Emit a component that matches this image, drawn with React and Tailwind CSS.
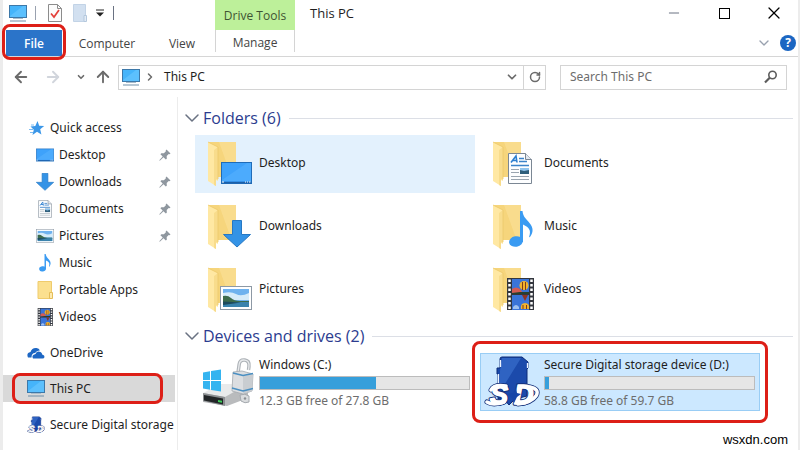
import { ArrowLeft, ArrowRight, ArrowUp, ChevronDown, ChevronRight, Minus, RotateCw, X } from "lucide-react";

/* ---------- artwork, drawn on the 52x52 canvas of the large tiles ---------- */

function DesktopArt() {
  return (
    <g>
      <rect x="20.5" y="24.5" width="30" height="21" fill="#3ea2fb" stroke="#1f6cb8" />
      <path d="M21 42 L46 25 H50 V43 H21z" fill="#56b0ff" opacity=".6" />
      <path d="M21 44.500h29" stroke="#1c5fa8" strokeWidth="1.500" />
      <path d="M21 44h2M44 44h1M46 44h1M48 44h1.500" stroke="#fff" strokeWidth="1.200" />
    </g>
  );
}

function DownloadArt() {
  return <path d="M31.500 19.500h9v14h9L36 46 22.500 33.500h9z" fill="#3493e6" stroke="#2678c4" />;
}

function DocumentArt() {
  return (
    <g>
      <path d="M22.500 15.500h17l6 6v24h-23z" fill="#fdfeff" stroke="#7b8794" />
      <path d="M39.500 15.500v6h6" fill="#e3e8ee" stroke="#7b8794" />
      <path d="M25 24.500l5-6.500 1 6.500M27 22.500h4" fill="none" stroke="#2d7fd0" strokeWidth="1.600" />
      <path d="M33 20.500h5M33 23.500h8M25 27.500h18" stroke="#3b83c9" strokeWidth="1.500" />
      <path d="M25 31.500h8M25 34.500h8M25 38.500h18M25 41.500h18" stroke="#9aa5b0" />
      <rect x="34" y="30" width="9" height="6" fill="#2f5f7c" />
      <path d="M34 30h9v2l-5 1-4-1z" fill="#8fc4ee" />
    </g>
  );
}

function MusicArt() {
  return (
    <g fill="#3a9bf2">
      <ellipse cx="30" cy="40.500" rx="7" ry="5.300" transform="rotate(-10 30 40.500)" />
      <path d="M34 10h2.500c.5 6 4 8 7 12 4 5 4 9 .5 14-.5.500-1 0-.8-.6 2-6 .3-9-6.200-12V41H34z" />
    </g>
  );
}

function PictureArt() {
  return (
    <g>
      <rect x="19.500" y="22.500" width="31" height="23" fill="#fff" stroke="#8d99a5" />
      <rect x="22" y="25" width="26" height="18" fill="#6fb2ee" />
      <path d="M22 29q8-2 13 1t13-1v7H22z" fill="#d6ebf9" />
      <path d="M22 32q5-1 8 2t9 3h9v2H22z" fill="#3d6b4c" />
      <path d="M22 38h26v5H22z" fill="#3a83ad" />
      <path d="M22 37.500l18 1L22 41z" fill="#1d4a5c" />
    </g>
  );
}

function VideoArt() {
  return (
    <g>
      <rect x="21" y="14" width="27" height="32" fill="#33363d" />
      <rect x="26" y="15" width="17" height="15" fill="#3a74d8" />
      <rect x="26" y="31" width="17" height="15" fill="#3a74d8" />
      <path d="M23.500 15.500v30M45.500 15.500v30" stroke="#fff" strokeWidth="2.500" strokeDasharray="2.500 2" />
      <ellipse cx="38" cy="21.500" rx="4.500" ry="4.500" fill="#f2b32c" />
      <path d="M36.500 18v8M39.500 18v8" stroke="#7b3b1d" />
      <path d="M26 25q4-3 8 0l3 4H26z" fill="#d45b52" />
      <path d="M34 28h9v2H26v-1z" fill="#28402e" />
      <path d="M36 31h6l-3 6z" fill="#8d3425" />
      <path d="M35 45q-1-6 4-6t4 6z" fill="#f2b32c" />
      <path d="M37 41v4M40.500 41v4" stroke="#7b3b1d" />
      <path d="M27 43q3-4 6 0v2h-6z" fill="#9fc1f0" />
    </g>
  );
}

function SdLetters(props) {
  return (
    <g fontFamily="Liberation Sans, sans-serif" fontSize="27" fontWeight="bold" fontStyle="italic" strokeLinejoin="round" {...props}>
      <text x="4" y="47">S</text>
      <text x="28" y="47">D</text>
    </g>
  );
}

function SdArt() {
  return (
    <g>
      <path d="M14 2q0-2 2-2h20l6 5v6l-1 1v27L29 42l-6 6-5-6H12V17h-1v-6h3z" fill="#1b4aab" stroke="#0d2a76" />
      <path d="M16 1h19L17 30h-3V14z" fill="#3d74d2" opacity=".6" />
      <path d="M14.500 3v7M12.500 17v14M41.500 6v5" stroke="#eef4ff" strokeWidth="1.300" />
      {/* swoosh behind the letters, outlined first and then filled */}
      <path d="M20 29Q8 27 5 33M1 45q6 4 17 0M44 30q10 2 6 9-5 7-18 8" fill="none" stroke="#14307a" strokeWidth="5" strokeLinecap="round" />
      <SdLetters stroke="#14307a" strokeWidth="3.5" />
      <path d="M20 29Q8 27 5 33M1 45q6 4 17 0M44 30q10 2 6 9-5 7-18 8" fill="none" stroke="#fff" strokeWidth="3.500" strokeLinecap="round" />
      <SdLetters fill="#fff" stroke="#fff" strokeWidth="1.5" />
      <path d="M21 37l6-1 3-5 1 5 4 1-4 3-3 6-2-5z" fill="#1746a8" />
    </g>
  );
}

function LockedDriveArt() {
  return (
    <g>
      <path d="M2 37l18-10h27v14L26 49 2 45z" fill="#b9bbbd" />
      <path d="M2 36l18-9h27L24 40z" fill="#e9eaeb" />
      <path d="M2 36l22 4v9L2 44z" fill="#8c8f92" />
      <path d="M3 38l19 3.500v6L3 43.500z" fill="#222527" />
      <path d="M17 43l4 .8v2l-4-.8z" fill="#3fd05a" />
      <path d="M2 15.500l7-1.200V23H2zM10 14.100l10-1.600V23H10zM2 24h7v8.700l-7-1.200zM10 24h10v10.500l-10-1.600z" fill="#35b4f0" />
      <path d="M38 16V8q0-5 5-5t5 6v8" fill="none" stroke="#aeb3b8" strokeWidth="3.500" strokeDasharray="28 99" transform="rotate(8 43 9)" />
      <path d="M38 16V8q0-5 5-5t5 6v8" fill="none" stroke="#e8eaec" strokeWidth="1.300" strokeDasharray="28 99" transform="rotate(8 43 9)" />
      <path d="M32 15l9-1 11 3-1 17-9 3-11-3z" fill="#dcdee1" stroke="#a5aaaf" strokeWidth=".8" />
      <path d="M42 19l10-2-1 17-9 3z" fill="#c9cdd1" />
      <path d="M32 16l10 2.500 10-2M31 31l11 3 10-2.500" fill="none" stroke="#4a8fc2" strokeWidth="1.400" />
      <path d="M39 38q5-2 9 1v6q-4 2-8-1z" fill="#dadcde" stroke="#a5aaaf" />
      <circle cx="44" cy="41.500" r="1.200" fill="#8a8e92" />
    </g>
  );
}

function FolderArt() {
  return (
    <g>
      <path d="M8 4h27v35H16z" fill="#f6d57c" />
      <path d="M18 4h17v35l-4 1z" fill="#fbe19a" opacity=".6" />
      <path d="M7 4l10 5v34l-2-1v6l-8-5z" fill="#ffe8a3" />
      <path d="M17 9v33l-2-1v7l-2-1V12z" fill="#f8dc8c" />
      <path d="M7 4l10 5v32" fill="none" stroke="#ecc869" strokeWidth=".8" />
    </g>
  );
}

/* ---------- small icons ---------- */

function PcIcon() {
  return (
    <svg viewBox="0 0 18 17" className="h-[17px] w-[18px] shrink-0">
      <rect x=".5" y=".5" width="17" height="12" fill="#45b4fa" stroke="#3d78a8" />
      <path d="M1 11L14 1h3v11H1z" fill="#6cc8ff" opacity=".6" />
      <path d="M4 13.500h10" stroke="#a9bccb" />
      <path d="M1 16h16" stroke="#6f8fa8" />
    </svg>
  );
}

function StarIcon() {
  return (
    <svg viewBox="0 0 18 16" className="h-4 w-[18px]">
      <path d="M10.500 1l1.700 4.800 5 .2-4 3.200 1.200 5.300-4.400-2.800L5.500 15l1.300-5.200L3.500 6.500l4.800-.6z" fill="#3b97e8" />
      <path d="M2 9.500h4M3 12.500h3M4 5h3" stroke="#7dbcf2" />
    </svg>
  );
}

function OneDriveIcon() {
  return (
    <svg viewBox="0 0 18 12" className="h-3 w-[18px]">
      <path d="M1 10.500Q-1 6 3.500 5 5 .5 9.500 1 12 1.200 13 3.500q-3-.5-5 2.500-3.500.2-3.500 4.500z" fill="#1d67c4" />
      <path d="M6 11.500Q4 8 8.500 7 10 3.500 13.500 5q1.500.7 1.700 2.500 2.600.5 2.300 2.500-.3 1.500-2 1.500z" fill="#1d67c4" />
    </svg>
  );
}

function SmallFolderIcon() {
  return (
    <svg viewBox="0 0 18 18" className="h-[18px] w-[18px]">
      <path d="M2 .5h13.500v17H2z" fill="#fbe08f" stroke="#efcb6c" />
      <path d="M13.500 11.500h3v6h-3z" fill="#fdeab0" stroke="#e5bd58" />
    </svg>
  );
}

function PinIcon() {
  return (
    <svg viewBox="0 0 12 12" className="mr-1 h-3 w-3">
      <path d="M7.500.5l4 4-1 .8-.8-.2-2 2 .1 2.600-1 .9-2.300-2.300L.8 11.700l-.5-.4L3.700 7.500 1.400 5.200l.9-1 2.600.1 2-2-.2-.8z" fill="#8f979f" />
    </svg>
  );
}

function SearchIcon() {
  return (
    <svg viewBox="0 0 14 14" className="h-3.5 w-3.5" fill="none" stroke="#5c5c5c">
      <circle cx="8.500" cy="5" r="3.700" strokeWidth="1.600" />
      <path d="M5.700 7.800L1 12.500" strokeWidth="2.200" />
    </svg>
  );
}

/* ---------- data ---------- */

const quickAccess = [
  { label: "Desktop", pinned: true, box: "20 24 31 22", art: <DesktopArt /> },
  { label: "Downloads", pinned: true, box: "22 19 28 28", art: <DownloadArt /> },
  { label: "Documents", pinned: true, box: "18 15 32 31", art: <DocumentArt /> },
  { label: "Pictures", pinned: true, box: "19 22 32 24", art: <PictureArt /> },
  { label: "Music", box: "17 10 36 37", art: <MusicArt /> },
  { label: "Portable Apps", icon: <SmallFolderIcon /> },
  { label: "Videos", box: "18 14 32 32", art: <VideoArt /> },
];

const folders = [
  { label: "Desktop", art: <DesktopArt />, hovered: true },
  { label: "Documents", art: <DocumentArt /> },
  { label: "Downloads", art: <DownloadArt /> },
  { label: "Music", art: <MusicArt /> },
  { label: "Pictures", art: <PictureArt /> },
  { label: "Videos", art: <VideoArt /> },
];

const drives = [
  { label: "Windows (C:)", info: "12.3 GB free of 27.8 GB", used: 55.7, art: <LockedDriveArt /> },
  { label: "Secure Digital storage device (D:)", info: "58.8 GB free of 59.7 GB", used: 1.8, art: <SdArt />, selected: true },
];

/* ---------- pieces ---------- */

function TitleBar() {
  return (
    <div className="flex h-[30px]">
      <div className="flex w-[212px] shrink-0 items-center pb-1 pl-1.5">
        <PcIcon />
        <span className="ml-2 h-3.5 w-px bg-gray-400" />
        <button type="button" aria-label="Properties" className="ml-3">
          <svg viewBox="0 0 14 18" className="h-[18px] w-3.5">
            <path d="M.5.500h9l4 4v13H.5z" fill="#fcfcfc" stroke="#8c8c8c" />
            <path d="M9.500.500v4h4" fill="none" stroke="#8c8c8c" />
            <path d="M3 9.500l3 3.500 5-7" fill="none" stroke="#e3403a" strokeWidth="1.700" />
          </svg>
        </button>
        <button type="button" aria-label="New folder" className="ml-[11px]">
          <svg viewBox="0 0 14 18" className="h-[18px] w-3.5">
            <path d="M.5.500h12v17H.5z" fill="#d2e0f0" stroke="#c2d3e6" />
            <path d="M11 11.500h2.500v6H11z" fill="#e3ecf6" stroke="#b5c8dd" />
          </svg>
        </button>
        <button type="button" aria-label="Customize toolbar" className="ml-[9px]">
          <svg viewBox="0 0 8 8" className="h-2 w-2">
            <path d="M0 1h8" stroke="#222" />
            <path d="M0 3.500h8L4 7.500z" fill="#222" />
          </svg>
        </button>
        <span className="ml-[9px] h-3.5 w-px bg-gray-500" />
      </div>
      <div className="flex w-20 shrink-0 items-center justify-center bg-[#bdf09a] pt-0.5 text-[12px] text-[#3f5433]">Drive Tools</div>
      <h1 className="ml-[15px] flex-1 pt-1 text-[13px] leading-[18px]">This PC</h1>
      <div className="flex h-[26px] text-black">
        <button type="button" aria-label="Minimize" className="flex w-[51px] items-center justify-center">
          <Minus className="h-4 w-4 text-gray-500" strokeWidth={1.5} />
        </button>
        <button type="button" aria-label="Maximize" className="flex w-[51px] items-center justify-center">
          <span className="h-[11px] w-[11px] border border-black" />
        </button>
        <button type="button" aria-label="Close" className="flex w-12 items-center justify-center">
          <X className="h-5 w-5" strokeWidth={1.5} />
        </button>
      </div>
    </div>
  );
}

function Ribbon() {
  return (
    <div className="flex h-[27px] border-b border-[#d6d6d6] text-[12px]">
      <div className="flex w-[212px] shrink-0 pl-[3px]">
        <button type="button" className="relative w-14 bg-[#2b74c9] pt-0.5 font-semibold text-white">
          File
          <span className="absolute -inset-x-1 -top-1.5 -bottom-1 rounded-lg border-3 border-[#dd1f17]" />
        </button>
        <button type="button" className="w-[90px] pt-0.5 text-[#444]">Computer</button>
        <button type="button" className="w-[60px] pt-0.5 text-[#444]">View</button>
      </div>
      <button type="button" className="mb-1 w-20 shrink-0 border-x border-[#d4d4d4] pt-1 text-[#444]">Manage</button>
      <div className="ml-auto flex items-center gap-2 pr-0.5">
        <button type="button" aria-label="Expand ribbon">
          <ChevronDown className="h-4 w-4 text-gray-400" strokeWidth={2} />
        </button>
        <button type="button" aria-label="Help" className="h-4 w-4 rounded-full bg-[#1b66c2] text-[12px] leading-4 font-bold text-white">?</button>
      </div>
    </div>
  );
}

function AddressRow() {
  return (
    <div className="flex h-10 items-center pr-[11px] pl-[9px] text-[#6b6b6b]">
      <button type="button" aria-label="Back"><ArrowLeft className="h-[18px] w-[18px]" strokeWidth={2.5} /></button>
      <button type="button" aria-label="Forward" className="ml-3.5 text-gray-300"><ArrowRight className="h-[18px] w-[18px]" strokeWidth={2.5} /></button>
      <button type="button" aria-label="Recent locations" className="ml-3.5"><ChevronDown className="h-2.5 w-2.5" strokeWidth={4} /></button>
      <button type="button" aria-label="Up" className="ml-2"><ArrowUp className="h-[18px] w-[18px]" strokeWidth={2.5} /></button>
      <div className="ml-1.5 flex h-[25px] flex-1 items-center border border-[#d4d4d4] pl-[3px]">
        <PcIcon />
        <ChevronRight className="ml-1 h-3 w-3" strokeWidth={3} />
        <span className="ml-2 flex-1 font-['Noto_Sans',sans-serif] text-[12px] text-[#1e1e1e]">This PC</span>
        <button type="button" aria-label="Previous locations" className="px-1"><ChevronDown className="h-3.5 w-3.5" strokeWidth={3} /></button>
        <button type="button" aria-label="Refresh" className="flex h-full w-[22px] items-center justify-center border-l border-[#d4d4d4]">
          <RotateCw className="h-3 w-3" strokeWidth={3} />
        </button>
      </div>
      <label className="ml-3.5 flex h-[25px] w-[227px] items-center border border-[#d4d4d4] pr-2 pl-[9px]">
        <input
          type="text"
          aria-label="Search This PC"
          placeholder="Search This PC"
          className="min-w-0 flex-1 font-['Noto_Sans',sans-serif] text-[12px] outline-none placeholder:text-[#6d6d6d]"
        />
        <SearchIcon />
      </label>
    </div>
  );
}

function SideItem({ icon, label, nested, pinned, active }) {
  return (
    <a
      href="#"
      className={`relative flex h-[27px] items-center gap-[5px] text-[12px] whitespace-nowrap ${nested ? "pl-[33px]" : "pl-6"} ${
        active ? "bg-[#d9d9d9]" : ""
      }`}
    >
      <span className="flex w-[18px] shrink-0 justify-center">{icon}</span>
      <span className="min-w-0 flex-1">{label}</span>
      {pinned && <PinIcon />}
      {active && <span className="absolute -inset-y-0.5 right-3 left-[9px] rounded-lg border-3 border-[#dd1f17]" />}
    </a>
  );
}

function Sidebar() {
  return (
    <nav className="flex w-[175px] shrink-0 flex-col gap-[9px] border-r border-[#ececec] pt-[17px] pr-0.5 font-['Noto_Sans',sans-serif]">
      <div>
        <SideItem icon={<StarIcon />} label="Quick access" />
        {quickAccess.map((item) => (
          <SideItem
            key={item.label}
            nested
            label={item.label}
            pinned={item.pinned}
            icon={item.icon || <svg viewBox={item.box} className="h-[18px] w-[18px]">{item.art}</svg>}
          />
        ))}
      </div>
      <SideItem icon={<OneDriveIcon />} label="OneDrive" />
      <SideItem icon={<PcIcon />} label="This PC" active />
      <SideItem icon={<svg viewBox="-2 -2 56 56" className="h-[18px] w-[18px]"><SdArt /></svg>} label="Secure Digital storage" />
    </nav>
  );
}

function GroupHeading({ children }) {
  return (
    <div className="flex h-[34px] items-center">
      <ChevronDown className="-ml-[15px] h-6 w-6 text-gray-500" strokeWidth={1.5} />
      <h2 className="-ml-px text-[16px] text-[#2c3c8f]">{children}</h2>
      <span className="mr-0.5 ml-2 h-px flex-1 bg-[#dcdfe6]" />
    </div>
  );
}

function FolderTile({ label, art, hovered }) {
  return (
    <button type="button" className={`flex h-[58px] items-center gap-1.5 pl-1.5 text-left text-[12px] ${hovered ? "bg-[#e3f1fd]" : ""}`}>
      <svg viewBox="0 0 52 52" className="h-[52px] w-[52px]">
        <FolderArt />
        {art}
      </svg>
      <span className="pb-0.5">{label}</span>
    </button>
  );
}

function DriveTile({ label, info, used, art, selected }) {
  return (
    <button
      type="button"
      className={`relative flex h-[58px] items-start gap-1.5 pt-1 pr-[5px] pl-1.5 text-left text-[12px] leading-4 ${
        selected ? "bg-[#cce8ff] outline -outline-offset-1 outline-[#99cdf5]" : ""
      }`}
    >
      <svg viewBox="0 0 52 52" className="h-[52px] w-[52px] shrink-0 overflow-visible">{art}</svg>
      <span className="flex min-w-0 flex-1 flex-col gap-[3px]">
        <span className="whitespace-nowrap">{label}</span>
        <span className="block h-3.5 border border-[#bcbcbc] bg-[#e6e6e6]">
          <span className="block h-full bg-[#369fdb]" style={{ width: `${used}%` }} />
        </span>
        <span className="text-[#6d6d6d]">{info}</span>
      </span>
      {selected && <span className="absolute -inset-x-2 -inset-y-3 rounded-lg border-3 border-[#dd1f17]" />}
    </button>
  );
}

export default function App() {
  return (
    <div className="relative flex min-h-screen flex-col border-r-2 border-l-3 border-[#ececec] bg-white font-['Open_Sans','Noto_Sans',sans-serif] text-[#1e1e1e]">
      <header>
        <TitleBar />
        <Ribbon />
        <AddressRow />
      </header>
      <div className="flex flex-1">
        <Sidebar />
        <main className="min-w-0 flex-1 pt-1 pr-[3px] pl-[17px]">
          <GroupHeading>Folders (6)</GroupHeading>
          <div className="grid grid-cols-[repeat(auto-fill,280px)] gap-[5px] font-['Noto_Sans',sans-serif]">
            {folders.map((folder) => (
              <FolderTile key={folder.label} {...folder} />
            ))}
          </div>
          <GroupHeading>Devices and drives (2)</GroupHeading>
          <div className="grid grid-cols-[repeat(auto-fill,280px)] gap-[5px] font-['Noto_Sans',sans-serif]">
            {drives.map((drive) => (
              <DriveTile key={drive.label} {...drive} />
            ))}
          </div>
        </main>
      </div>
      <span className="absolute right-2.5 bottom-0.5 font-['Liberation_Sans',sans-serif] text-[13px] leading-4 text-black">wsxdn.com</span>
    </div>
  );
}
